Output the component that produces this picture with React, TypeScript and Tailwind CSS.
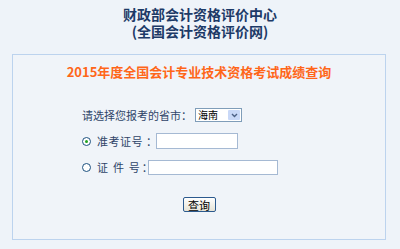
const font = { fontFamily: '"Noto Sans CJK SC", "Liberation Sans", sans-serif' };

function Radio({ checked }: { checked?: boolean }) {
  return (
    <span className="flex h-[9px] w-[9px] items-center justify-center rounded-full border border-[#1c5180] bg-white">
      {checked && <span className="h-[3px] w-[3px] rounded-full bg-[#21a121]" />}
    </span>
  );
}

export default function App() {
  return (
    <div
      className="h-[249px] w-[400px] overflow-hidden bg-[#eef3f9] text-[#2f4468]"
      style={font}
    >
      <div className="pt-[6px] text-center text-[14px] font-bold text-[#1d3a67]">
        <div className="h-[17px] leading-[17px]">财政部会计资格评价中心</div>
        <div className="h-[17px] leading-[17px]">(全国会计资格评价网)</div>
      </div>

      <div className="mx-[12px] mt-[14px] w-[374px] border border-[#bcd3ee] bg-[#f0f4f9] pb-[27px] pt-[9px]">
        <div className="text-center text-[13px] font-bold leading-[16px] text-[#ff6619]">
          2015年度全国会计专业技术资格考试成绩查询
        </div>

        <div className="mt-[27px] flex flex-col gap-[10px] pl-[69px] text-[11px] leading-[16px]">
          <div className="flex h-[16px] items-center">
            <span>请选择您报考的省市：</span>
            <div className="ml-[3px] flex h-[14px] w-[47px] items-center border border-[#7f9db9] bg-white">
              <span className="flex-1 pl-[2px] text-[10px] leading-[12px] text-black">海南</span>
              <span className="mr-[1px] flex h-[10px] w-[12px] items-center justify-center rounded-[1px] bg-[#c9d8f7]">
                <svg width="7" height="5" viewBox="0 0 7 5">
                  <path d="M1 1 L3.5 3.5 L6 1" fill="none" stroke="#4d6185" strokeWidth="1.4" />
                </svg>
              </span>
            </div>
          </div>

          <div className="flex h-[16px] items-center">
            <Radio checked />
            <span className="ml-[6px] tracking-[0.5px]">准考证号</span>
            <span className="ml-[3px]">：</span>
            <div className="ml-[-1px] h-[16px] w-[82px] border border-[#a5b9d3] bg-white" />
          </div>

          <div className="flex h-[16px] items-center">
            <Radio />
            <span className="ml-[6px] whitespace-pre">证  件  号</span>
            <span className="ml-[2px]">：</span>
            <div className="ml-[-5px] h-[15px] w-[130px] border border-[#a5b9d3] bg-white" />
          </div>
        </div>

        <div className="mt-[22px] flex justify-center">
          <button className="h-[15px] w-[33px] rounded-[2px] border border-[#2c5a8e] bg-gradient-to-b from-white to-[#e6e3d6] text-[11px] leading-[12px] text-black">
            查询
          </button>
        </div>
      </div>
    </div>
  );
}
